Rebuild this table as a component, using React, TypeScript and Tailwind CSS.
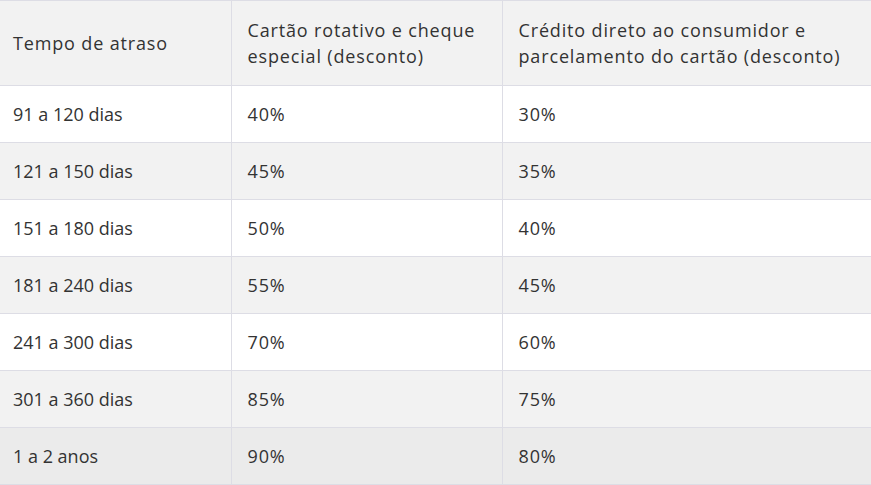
import React from "react";

const rows: [string, string, string][] = [
  ["91 a 120 dias", "40%", "30%"],
  ["121 a 150 dias", "45%", "35%"],
  ["151 a 180 dias", "50%", "40%"],
  ["181 a 240 dias", "55%", "45%"],
  ["241 a 300 dias", "70%", "60%"],
  ["301 a 360 dias", "85%", "75%"],
  ["1 a 2 anos", "90%", "80%"],
];

export default function App() {
  return (
    <div className="w-[871px] h-[485px] bg-white overflow-hidden font-['Open_Sans',sans-serif] text-[18px] tracking-[0.85px] text-[#333333]">
      <table className="w-[871px] border-collapse table-fixed border-t border-b border-[#dddde5]">
        <colgroup>
          <col className="w-[231px]" />
          <col className="w-[271px]" />
          <col className="w-[369px]" />
        </colgroup>
        <thead>
          <tr className="bg-[#f2f2f2] h-[85px]">
            <th className="text-left font-normal align-middle pl-[13px] pr-2 leading-[26px] border-b border-r border-[#dddde5]">
              Tempo de atraso
            </th>
            <th className="text-left font-normal align-middle pl-4 pr-2 leading-[26px] border-b border-r border-[#dddde5]">
              Cartão rotativo e cheque especial (desconto)
            </th>
            <th className="text-left font-normal align-middle pl-4 pr-2 leading-[26px] border-b border-[#dddde5]">
              Crédito direto ao consumidor e parcelamento do cartão (desconto)
            </th>
          </tr>
        </thead>
        <tbody>
          {rows.map((r, i) => (
            <tr
              key={r[0]}
              className={
                i === rows.length - 1
                  ? "bg-[#ebebeb] h-[57px]"
                  : i % 2 === 0
                  ? "bg-white h-[57px]"
                  : "bg-[#f2f2f2] h-[57px]"
              }
            >
              <td className="pl-[13px] pr-2 tracking-normal align-middle border-b border-r border-[#dddde5]">{r[0]}</td>
              <td className="pl-4 pr-2 align-middle border-b border-r border-[#dddde5]">{r[1]}</td>
              <td className="pl-4 pr-2 align-middle border-b border-[#dddde5]">{r[2]}</td>
            </tr>
          ))}
        </tbody>
      </table>
    </div>
  );
}
